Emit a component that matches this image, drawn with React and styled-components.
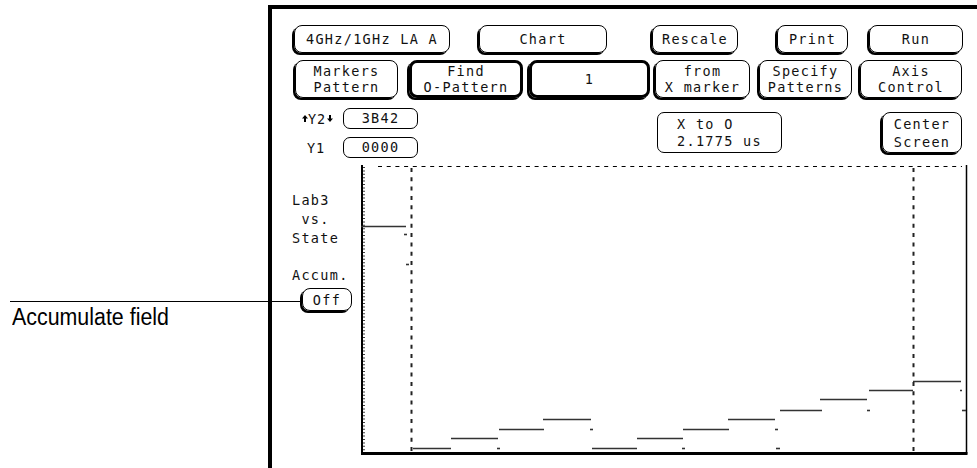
import React from "react";
import styled, { createGlobalStyle } from "styled-components";

const Global = createGlobalStyle`
  html, body { margin: 0; padding: 0; background: #fff; }
  body { width: 977px; height: 468px; overflow: hidden; }
`;

const MONO = `"DejaVu Sans Mono", "Liberation Mono", monospace`;

const Page = styled.div`
  display: flex;
  width: 977px;
  height: 468px;
  font-family: ${MONO};
  color: #111;
`;

const Annotation = styled.aside`
  width: 268px;
  flex: none;
  box-sizing: border-box;
  padding-top: 301px;
`;

const Leader = styled.div`
  width: 290px;
  height: 1px;
  margin-left: 10px;
  background: #000;
`;

const Caption = styled.div`
  margin: 3px 0 0 12px;
  font-family: "Liberation Sans", Arial, sans-serif;
  font-size: 23px;
  line-height: 24px;
  color: #000;
  white-space: nowrap;
  transform: scaleX(0.93);
  transform-origin: left center;
`;

const Frame = styled.main`
  flex: 1;
  min-width: 0;
  margin-top: 5px;
  border-top: 4px solid #000;
  border-left: 4px solid #000;
  display: flex;
  flex-direction: column;
`;

const Row = styled.div`
  display: flex;
  align-items: flex-start;
  margin-top: ${(p) => p.$mt}px;
  padding-left: ${(p) => p.$pl}px;
`;

const Key = styled.div`
  box-sizing: border-box;
  flex: none;
  width: ${(p) => p.$w}px;
  height: ${(p) => p.$h}px;
  margin-left: ${(p) => p.$ml || 0}px;
  margin-top: ${(p) => p.$mt || 0}px;
  border: ${(p) => (p.$active ? 3 : 1)}px solid #000;
  border-radius: 8px;
  box-shadow: -2px 2px 0 #000;
  display: flex;
  flex-direction: column;
  align-items: center;
  justify-content: center;
  font-size: 13.5px;
  letter-spacing: 1.3px;
  line-height: ${(p) => p.$lh || 16}px;
  white-space: pre;
  text-align: center;
`;

const Readout = styled.div`
  box-sizing: border-box;
  flex: none;
  width: ${(p) => p.$w}px;
  height: ${(p) => p.$h}px;
  margin-left: ${(p) => p.$ml || 0}px;
  margin-top: ${(p) => p.$mt || 0}px;
  border: 1px solid #000;
  border-radius: 7px;
  display: flex;
  flex-direction: column;
  align-items: center;
  justify-content: center;
  font-size: 13.5px;
  letter-spacing: 1.3px;
  line-height: 17px;
  white-space: pre;
`;

const YGroup = styled.div`
  display: flex;
  flex-direction: column;
  gap: 8px;
`;

const YRow = styled.div`
  display: flex;
  align-items: center;
`;

const YLabel = styled.div`
  width: 41px;
  flex: none;
  display: flex;
  align-items: center;
  padding-left: ${(p) => p.$indent || 0}px;
  box-sizing: border-box;
  font-size: 13.5px;
  letter-spacing: 0.8px;
`;

const Arrow = styled.svg`
  width: 6px;
  height: 7px;
  margin: 0 ${(p) => p.$mr || 0}px 0 ${(p) => p.$ml || 0}px;
  flex: none;
`;

const Body = styled.div`
  flex: 1;
  display: flex;
  margin-top: 7px;
  min-height: 0;
`;

const Side = styled.div`
  width: 89px;
  flex: none;
  box-sizing: border-box;
  padding: 26px 0 0 20px;
  display: flex;
  flex-direction: column;
  align-items: flex-start;
`;

const SideText = styled.div`
  font-size: 13.5px;
  letter-spacing: 1.3px;
  line-height: 19px;
  white-space: pre;
  margin-top: ${(p) => p.$mt || 0}px;
`;

const ChartSvg = styled.svg`
  flex: none;
  display: block;
`;

const steps = [
  [0, 45, 61],
  [52, 90, 283],
  [90, 137, 273],
  [138, 183, 264],
  [182, 230, 254],
  [231, 276, 283],
  [276, 322, 273],
  [322, 368, 264],
  [367, 414, 254],
  [419, 461, 245],
  [459, 506, 234],
  [508, 552, 225],
  [552, 600, 216],
];

const marks = [
  [43, 46, 69],
  [45, 48, 99],
  [136, 139, 283],
  [229, 232, 264],
  [321, 324, 283],
  [414, 417, 264],
  [415, 419, 283],
  [506, 509, 245],
  [599, 601, 225],
  [601, 605, 245],
];

function Chart() {
  return (
    <ChartSvg width="616" height="303" viewBox="0 0 616 303">
      <line x1="1" y1="0" x2="1" y2="289" stroke="#000" strokeWidth="2" />
      <line x1="3" y1="2" x2="3" y2="287" stroke="#000" strokeWidth="1.5" strokeDasharray="1 2.4" />
      <line x1="17" y1="1.5" x2="601" y2="1.5" stroke="#000" strokeWidth="1" strokeDasharray="4 4.7" />
      <line x1="605.5" y1="0" x2="605.5" y2="289" stroke="#000" strokeWidth="1.5" />
      <line x1="0" y1="288.5" x2="606.5" y2="288.5" stroke="#000" strokeWidth="3" />
      <line x1="50.5" y1="3" x2="50.5" y2="287" stroke="#222" strokeWidth="2" strokeDasharray="4 5.3" />
      <line x1="552.5" y1="3" x2="552.5" y2="287" stroke="#222" strokeWidth="2" strokeDasharray="4 5.3" />
      {steps.map(([a, b, y], i) => (
        <line key={i} x1={a} y1={y + 0.5} x2={b} y2={y + 0.5} stroke="#333" strokeWidth="1.6" />
      ))}
      {marks.map(([a, b, y], i) => (
        <line key={"m" + i} x1={a} y1={y + 0.5} x2={b} y2={y + 0.5} stroke="#333" strokeWidth="1.6" />
      ))}
    </ChartSvg>
  );
}

function UpArrow(props) {
  return (
    <Arrow viewBox="0 0 6 7" {...props}>
      <path d="M3 0 L6 3.5 H4 V7 H2 V3.5 H0 Z" fill="#000" />
    </Arrow>
  );
}

function DownArrow(props) {
  return (
    <Arrow viewBox="0 0 6 7" {...props}>
      <path d="M3 7 L6 3.5 H4 V0 H2 V3.5 H0 Z" fill="#000" />
    </Arrow>
  );
}

export default function App() {
  return (
    <>
      <Global />
      <Page>
        <Annotation>
          <Leader />
          <Caption>Accumulate field</Caption>
        </Annotation>
        <Frame>
          <Row $mt={16} $pl={22}>
            <Key $w={156} $h={28}>4GHz/1GHz LA A</Key>
            <Key $w={128} $h={28} $ml={29}>Chart</Key>
            <Key $w={86} $h={28} $ml={45}>Rescale</Key>
            <Key $w={71} $h={28} $ml={39}>Print</Key>
            <Key $w={94} $h={28} $ml={21}>Run</Key>
          </Row>
          <Row $mt={7} $pl={23}>
            <Key $w={103} $h={38}>{"Markers\nPattern"}</Key>
            <Key $w={114} $h={38} $ml={11} $active>{"Find\nO-Pattern"}</Key>
            <Key $w={121} $h={38} $ml={6} $active>1</Key>
            <Key $w={95} $h={38} $ml={5}>{"from\nX marker"}</Key>
            <Key $w={93} $h={38} $ml={9}>{"Specify\nPatterns"}</Key>
            <Key $w={102} $h={38} $ml={8}>{"Axis\nControl"}</Key>
          </Row>
          <Row $mt={10} $pl={30}>
            <YGroup>
              <YRow>
                <YLabel>
                  <UpArrow />
                  Y2
                  <DownArrow $ml={1} />
                </YLabel>
                <Readout $w={75} $h={21}>3B42</Readout>
              </YRow>
              <YRow>
                <YLabel $indent={5}>Y1</YLabel>
                <Readout $w={75} $h={21}>0000</Readout>
              </YRow>
            </YGroup>
            <Readout $w={125} $h={41} $ml={239} $mt={4}>{"X to O\n2.1775 us"}</Readout>
            <Key $w={80} $h={41} $ml={100} $mt={4} $lh={18}>{"Center\nScreen"}</Key>
          </Row>
          <Body>
            <Side>
              <SideText>{"Lab3\n vs.\nState"}</SideText>
              <SideText $mt={18}>Accum.</SideText>
              <Key $w={50} $h={23} $ml={10} $mt={3}>Off</Key>
            </Side>
            <Chart />
          </Body>
        </Frame>
      </Page>
    </>
  );
}
